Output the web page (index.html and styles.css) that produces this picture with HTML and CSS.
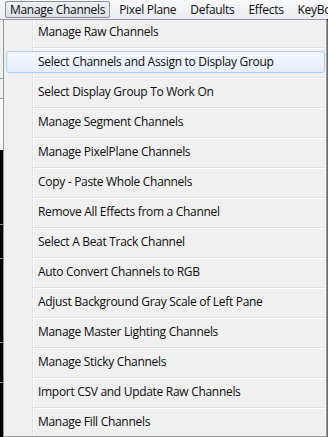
FILE: index.html
```html
<!DOCTYPE html>
<html lang="en">
<head>
  <meta charset="UTF-8">
  <meta name="viewport" content="width=device-width, initial-scale=1.0">
  <title>Manage Channels</title>
  <link rel="stylesheet" href="styles.css">
</head>
<body>
  <!-- Barra de menu principal -->
  <nav class="menubar">
    <span class="menubar__item menubar__item--open">Manage Channels</span>
    <span class="menubar__item">Pixel Plane</span>
    <span class="menubar__item">Defaults</span>
    <span class="menubar__item">Effects</span>
    <span class="menubar__item">KeyBoard</span>
  </nav>

  <div class="workspace">
    <!-- Ventana de fondo que asoma a la izquierda -->
    <div class="backdrop"></div>

    <!-- Menu desplegado -->
    <ul class="dropdown">
      <li class="dropdown__item">Manage Raw Channels</li>
      <li class="dropdown__sep"></li>
      <li class="dropdown__item dropdown__item--hover">Select Channels and Assign to Display Group</li>
      <li class="dropdown__sep"></li>
      <li class="dropdown__item">Select Display Group To Work On</li>
      <li class="dropdown__sep"></li>
      <li class="dropdown__item">Manage Segment Channels</li>
      <li class="dropdown__sep"></li>
      <li class="dropdown__item">Manage PixelPlane Channels</li>
      <li class="dropdown__sep"></li>
      <li class="dropdown__item">Copy - Paste Whole Channels</li>
      <li class="dropdown__sep"></li>
      <li class="dropdown__item">Remove All Effects from a Channel</li>
      <li class="dropdown__sep"></li>
      <li class="dropdown__item">Select A Beat Track Channel</li>
      <li class="dropdown__sep"></li>
      <li class="dropdown__item">Auto Convert Channels to RGB</li>
      <li class="dropdown__sep"></li>
      <li class="dropdown__item">Adjust Background Gray Scale of Left Pane</li>
      <li class="dropdown__sep"></li>
      <li class="dropdown__item">Manage Master Lighting Channels</li>
      <li class="dropdown__sep"></li>
      <li class="dropdown__item">Manage Sticky Channels</li>
      <li class="dropdown__sep"></li>
      <li class="dropdown__item">Import CSV and Update Raw Channels</li>
      <li class="dropdown__sep"></li>
      <li class="dropdown__item">Manage Fill Channels</li>
    </ul>
  </div>
</body>
</html>
```

FILE: styles.css
```css
body {
  margin: 0;
  width: 328px;
  height: 437px;
  overflow: hidden;
  font-family: 'Open Sans', 'Noto Sans', sans-serif;
  font-size: 12px;
  letter-spacing: -0.3px;
  color: #0c0c0c;
  background: #000;
}
/* Barra de menu */
.menubar {
  display: flex;
  height: 19px;
  padding-left: 5px;
  background: linear-gradient(#f8f9fb, #e9ecf1);
  white-space: nowrap;
  overflow: hidden;
}
.menubar__item {
  padding: 0 6px;
  line-height: 17px;
  border: 1px solid transparent;
  border-radius: 2px;
}
.menubar__item--open {
  padding: 0 4px;
  margin-top: 1px;
  margin-right: 2px;
  height: 15px;
  line-height: 15px;
  border-color: #8e9092;
  background: linear-gradient(#eceff3, #dde2e8);
}
/* Zona de trabajo */
.workspace {
  display: flex;
  height: 418px;
}
/* Franja de la ventana de atras, con sus lineas de rejilla */
.backdrop {
  width: 3px;
  background: linear-gradient(
    #a0a0a0 0, #a0a0a0 1px,
    #f0f0f0 1px, #f0f0f0 59px,
    #a0a0a0 59px, #a0a0a0 60px,
    #f0f0f0 60px, #f0f0f0 79px,
    #a0a0a0 79px, #a0a0a0 80px,
    #fafafa 80px, #fafafa 131px,
    #000 131px, #000 205px,
    #8a8a8a 205px, #8a8a8a 206px,
    #000 206px, #000 239px,
    #8a8a8a 239px, #8a8a8a 240px,
    #000 240px, #000 323px,
    #8a8a8a 323px, #8a8a8a 324px,
    #000 324px, #000 363px,
    #8a8a8a 363px, #8a8a8a 364px,
    #000 364px);
}
.dropdown {
  list-style: none;
  margin: 0;
  padding: 1px 0;
  width: 322px;
  height: 414px;
  border: 1px solid #979797;
  box-shadow: 1px 1px 0 #6d6d6d;
  background:
    linear-gradient(to right, transparent 28px, #e2e3e3 28px, #e2e3e3 29px, #fff 29px, #fff 30px, transparent 30px),
    #f0f0f0;
}
.dropdown__item {
  height: 20px;
  line-height: 20px;
  margin: 0 1px 0 2px;
  padding-left: 31px;
  border: 1px solid transparent;
  border-radius: 3px;
  white-space: nowrap;
}
.dropdown__item--hover {
  border-color: #aecff7;
  background: linear-gradient(#f2f7fd, #e6effa);
}
.dropdown__sep {
  height: 1px;
  margin: 4px 1px 2px 29px;
  background: #e0e0e0;
  border-bottom: 1px solid #fff;
}
```
